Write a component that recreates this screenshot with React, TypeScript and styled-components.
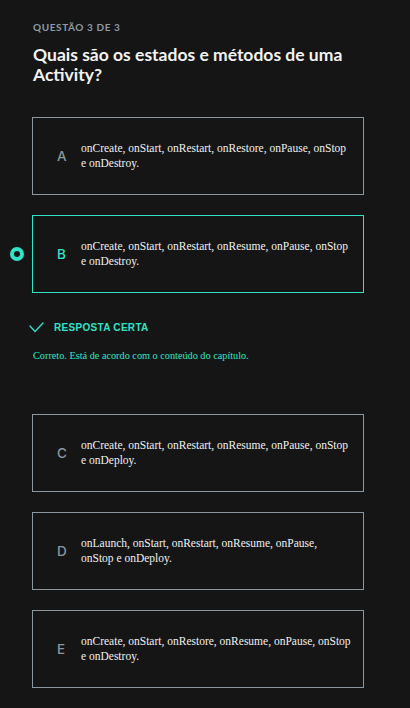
import React from 'react';
import styled, { createGlobalStyle } from 'styled-components';

const ACCENT = '#31e3c6';
const MUTED = '#8b979e';

const GlobalStyle = createGlobalStyle`
  html, body {
    margin: 0;
    padding: 0;
    background: #151515;
  }
  #root {
    min-height: 708px;
    background: #151515;
  }
`;

const Page = styled.div`
  display: flex;
  flex-direction: column;
  padding: 21px 46px 20px 32px;
`;

const Kicker = styled.div`
  margin-left: 1px;
  font-family: Lato, 'Noto Sans', sans-serif;
  font-size: 10px;
  font-weight: 700;
  line-height: 12px;
  color: #8d9ba6;
  letter-spacing: 0.6px;
`;

const Title = styled.h1`
  margin: 12px 0 0 1px;
  font-family: Lato, 'Noto Sans', sans-serif;
  font-size: 17.5px;
  font-weight: 700;
  line-height: 20px;
  color: #f2f2f2;
`;

const Options = styled.div`
  display: flex;
  flex-direction: column;
  margin-top: 32px;
`;

const OptionRow = styled.div<{ $gap: number }>`
  margin-bottom: ${p => p.$gap}px;
`;

const Radio = styled.span`
  position: absolute;
  left: -23px;
  top: 50%;
  width: 14px;
  height: 14px;
  margin-top: -7px;
  box-sizing: border-box;
  border-radius: 50%;
  border: 4.5px solid ${ACCENT};
`;

const Card = styled.div<{ $active?: boolean }>`
  position: relative;
  display: flex;
  align-items: center;
  height: 78px;
  box-sizing: border-box;
  padding: 0 12px 0 24px;
  border: 1px solid ${p => (p.$active ? ACCENT : MUTED)};
`;

const Letter = styled.span<{ $active?: boolean }>`
  flex: 0 0 24px;
  font-family: Inter, 'Noto Sans', sans-serif;
  font-size: 13.5px;
  font-weight: 500;
  color: ${p => (p.$active ? ACCENT : MUTED)};
`;

const AnswerText = styled.p`
  margin: 0;
  max-width: 270px;
  font-family: 'Liberation Serif', 'Times New Roman', serif;
  font-size: 11.5px;
  line-height: 15px;
  color: #f0f0f0;
`;

const Result = styled.div`
  margin: 26px 0 52px;
`;

const Verdict = styled.div`
  display: flex;
  align-items: center;
  gap: 10px;
  margin-left: -3px;
  height: 16px;
`;

const VerdictLabel = styled.span`
  font-family: 'Liberation Sans', Arial, sans-serif;
  font-size: 10px;
  font-weight: 700;
  letter-spacing: 0.3px;
  color: ${ACCENT};
`;

const Feedback = styled.p`
  margin: 15px 0 0 1px;
  font-family: 'Liberation Serif', 'Times New Roman', serif;
  font-size: 10.25px;
  line-height: 12px;
  color: ${ACCENT};
`;

const CheckIcon = () => (
  <svg width="15" height="11" viewBox="0 0 15 11" fill="none">
    <polyline
      points="1,4 6,9.5 14,1"
      stroke={ACCENT}
      strokeWidth="1.3"
      strokeLinecap="round"
      strokeLinejoin="round"
    />
  </svg>
);

type Option = { key: string; text: string };

const options: Option[] = [
  { key: 'A', text: 'onCreate, onStart, onRestart, onRestore, onPause, onStop e onDestroy.' },
  { key: 'B', text: 'onCreate, onStart, onRestart, onResume, onPause, onStop e onDestroy.' },
  { key: 'C', text: 'onCreate, onStart, onRestart, onResume, onPause, onStop e onDeploy.' },
  { key: 'D', text: 'onLaunch, onStart, onRestart, onResume, onPause, onStop e onDeploy.' },
  { key: 'E', text: 'onCreate, onStart, onRestore, onResume, onPause, onStop e onDestroy.' },
];

const selected = 'B';

export default function App() {
  return (
    <>
      <GlobalStyle />
      <Page>
        <Kicker>QUESTÃO 3 DE 3</Kicker>
        <Title>Quais são os estados e métodos de uma Activity?</Title>
        <Options>
          {options.map(opt => {
            const active = opt.key === selected;
            return (
              <OptionRow key={opt.key} $gap={active ? 0 : 20}>
                <Card $active={active}>
                  {active && <Radio />}
                  <Letter $active={active}>{opt.key}</Letter>
                  <AnswerText>{opt.text}</AnswerText>
                </Card>
                {active && (
                  <Result>
                    <Verdict>
                      <CheckIcon />
                      <VerdictLabel>RESPOSTA CERTA</VerdictLabel>
                    </Verdict>
                    <Feedback>Correto. Está de acordo com o conteúdo do capítulo.</Feedback>
                  </Result>
                )}
              </OptionRow>
            );
          })}
        </Options>
      </Page>
    </>
  );
}
